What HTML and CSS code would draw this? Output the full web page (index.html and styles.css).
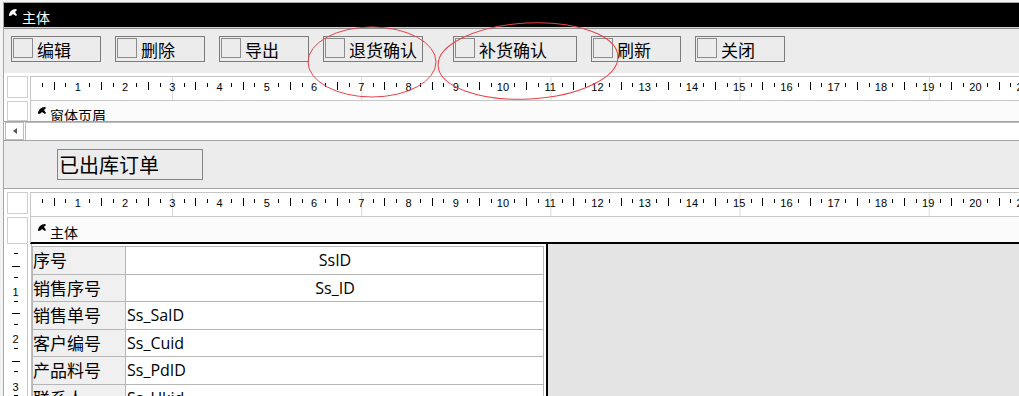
FILE: index.html
```html
<!DOCTYPE html>
<html lang="zh-CN">
<head>
    <meta charset="UTF-8">
    <meta name="viewport" content="width=device-width, initial-scale=1.0">
    <title>已出库订单</title>
    <link rel="stylesheet" href="styles.css">
</head>
<body>
    <div class="designer">
        <div class="form-title">
            <svg class="grip" width="8" height="8" viewBox="0 0 8 8"><path d="M0 7 C0 3 3 0 7 0 L8 1 L6 3 L8 6 L7 7 L4 5 C3 6 2 7 0 7 Z"/></svg>
            <span>主体</span>
        </div>

        <div class="toolbar">
            <div class="cmd"><span class="box"></span>编辑</div>
            <div class="cmd"><span class="box"></span>删除</div>
            <div class="cmd"><span class="box"></span>导出</div>
            <div class="cmd w100"><span class="box"></span>退货确认</div>
            <div class="cmd w124"><span class="box"></span>补货确认</div>
            <div class="cmd"><span class="box"></span>刷新</div>
            <div class="cmd"><span class="box"></span>关闭</div>
        </div>

        <div class="lane ruler-lane">
            <div class="gutter"><div class="gbox"></div></div>
            <div class="ruler hruler"></div>
        </div>

        <div class="lane section">
            <div class="gutter"><div class="gbox"></div></div>
            <div class="sec-head">
                <svg class="grip" width="8" height="8" viewBox="0 0 8 8"><path d="M0 7 C0 3 3 0 7 0 L8 1 L6 3 L8 6 L7 7 L4 5 C3 6 2 7 0 7 Z"/></svg>
                <span>窗体页眉</span>
            </div>
        </div>

        <div class="hscroll">
            <div class="hbtn"></div>
            <div class="hfield"></div>
        </div>

        <div class="form-header">
            <div class="caption">已出库订单</div>
        </div>

        <div class="lane ruler-lane">
            <div class="gutter"><div class="gbox"></div></div>
            <div class="ruler hruler"></div>
        </div>

        <div class="lane section body-sec">
            <div class="gutter"><div class="gbox"></div></div>
            <div class="sec-head">
                <svg class="grip" width="8" height="8" viewBox="0 0 8 8"><path d="M0 7 C0 3 3 0 7 0 L8 1 L6 3 L8 6 L7 7 L4 5 C3 6 2 7 0 7 Z"/></svg>
                <span>主体</span>
            </div>
        </div>

        <div class="detail">
            <div class="vruler" id="vruler"></div>
            <div class="canvas">
                <table class="fields">
                    <tr><td class="lab">序号</td><td class="val mid">SsID</td></tr>
                    <tr><td class="lab">销售序号</td><td class="val mid">Ss_ID</td></tr>
                    <tr><td class="lab">销售单号</td><td class="val">Ss_SaID</td></tr>
                    <tr><td class="lab">客户编号</td><td class="val">Ss_Cuid</td></tr>
                    <tr><td class="lab">产品料号</td><td class="val">Ss_PdID</td></tr>
                    <tr><td class="lab">联系人</td><td class="val">Ss_Ukid</td></tr>
                </table>
            </div>
            <div class="outside"></div>
        </div>
    </div>

    <svg class="marks" width="1019" height="396">
        <ellipse cx="372" cy="62" rx="64" ry="35"/>
        <ellipse cx="528" cy="61" rx="90" ry="38" transform="rotate(-3 528 61)"/>
    </svg>

    <script>
        function buildRuler(el, count, vertical) {
            for (let q = 1; q <= count; q++) {
                let cell = document.createElement("span");
                cell.className = vertical ? "vq" : "q";
                let mark = document.createElement("i");
                if (q % 4 === 0) {
                    mark.className = "num";
                    mark.innerText = q / 4;
                } else if (q % 4 === 2) {
                    mark.className = "half";
                } else {
                    mark.className = "tick";
                }
                cell.appendChild(mark);
                el.appendChild(cell);
            }
        }

        let rulers = document.querySelectorAll(".hruler");
        for (let i = 0; i < rulers.length; i++) {
            buildRuler(rulers[i], 86, false);
        }
        buildRuler(document.getElementById("vruler"), 14, true);
    </script>
</body>
</html>
```

FILE: styles.css
```css
* {
    box-sizing: border-box;
}
html, body {
    margin: 0;
    height: 396px;
    overflow: hidden;
}
body {
    background: #f3f3f3;
    padding: 2px 0 0 3px;
    font-family: "Noto Sans CJK SC", sans-serif;
    color: #000;
}
.designer {
    height: 394px;
    overflow: hidden;
    background: #fff;
    border-top: 1px solid #a8a8a8;
    border-left: 1px solid #a8a8a8;
}

/* title bar */
.form-title {
    height: 25px;
    display: flex;
    align-items: flex-start;
    padding-left: 5px;
    background: #000;
    color: #fff;
    font-size: 14px;
    border-bottom: 1px solid #d4d4d4;
}
.form-title .grip {
    margin: 6px 5px 0 0;
    fill: #fff;
}
.form-title span {
    line-height: 20px;
    margin-top: 4px;
}

/* command buttons */
.toolbar {
    display: flex;
    gap: 14px;
    height: 45px;
    padding: 7px 0 0 7px;
    background: #ececec;
    border-top: 1px solid #8c8c8c;
}
.cmd {
    flex: none;
    width: 90px;
    height: 26px;
    display: flex;
    align-items: center;
    padding-left: 1px;
    border: 1px solid #7c7c7c;
    font-size: 17px;
    white-space: nowrap;
}
.cmd .box {
    flex: none;
    width: 20px;
    height: 20px;
    align-self: flex-start;
    margin: 1px 4px 0 0;
    border: 1px solid #8c8c8c;
}
.cmd.w100 {
    width: 100px;
}
.cmd.w124 {
    width: 124px;
    margin-left: 16px;
}

/* lanes with left gutter */
.lane {
    display: flex;
}
.gutter {
    flex: none;
    width: 26px;
    padding-left: 3px;
}
.gbox {
    width: 21px;
    height: 100%;
    border: 1px solid #cfcfcf;
}
.ruler-lane {
    height: 25px;
    margin-top: 3px;
}
.ruler-lane .gbox {
    height: 22px;
}
.ruler {
    flex: 1;
    display: flex;
    overflow: hidden;
    padding-left: 5.4px;
    border: 1px solid #c6c6c6;
    border-right: 0;
    background: linear-gradient(to right, #d9d9d9 0 1px, transparent 1px) 141px 0 / 189.2px 100% repeat-x, #fff;
}
.q {
    flex: none;
    width: 11.825px;
    display: flex;
    justify-content: center;
}
.q i, .vq i {
    font-style: normal;
    display: block;
}
.q .tick {
    width: 1px;
    height: 4px;
    margin-top: 6px;
    background: #000;
}
.q .half {
    width: 1px;
    height: 8px;
    margin-top: 5px;
    background: #000;
}
.q .num, .vq .num {
    font: 11px/10px "Liberation Sans", sans-serif;
    margin-top: 5px;
}

/* section bars */
.section {
    height: 21px;
    border-bottom: 1px solid #a4a4a4;
}
.sec-head {
    flex: 1;
    display: flex;
    align-items: flex-start;
    overflow: hidden;
    padding-left: 7px;
    border-left: 1px solid #c6c6c6;
    background: #fbfbfb;
    font-size: 14px;
}
.sec-head .grip {
    flex: none;
    margin: 6px 4px 0 0;
    fill: #000;
}
.sec-head span {
    line-height: 18px;
    margin-top: 5px;
    white-space: nowrap;
}
.body-sec {
    height: 27px;
    border-bottom: 0;
}
.body-sec .sec-head {
    border-bottom: 2px solid #000;
}
.body-sec .sec-head .grip {
    margin-top: 7px;
}
.body-sec .sec-head span {
    margin-top: 6px;
}

/* horizontal scroller */
.hscroll {
    display: flex;
    height: 19px;
    padding-left: 1px;
    border-bottom: 1px solid #a4a4a4;
}
.hbtn {
    width: 19px;
    display: flex;
    align-items: center;
    justify-content: center;
    border: 1px solid #bcbcbc;
}
.hbtn::before {
    content: "";
    border: 3px solid transparent;
    border-left: 0;
    border-right: 4px solid #555;
}
.hfield {
    flex: 1;
    margin-left: 1px;
    border-top: 1px solid #bcbcbc;
    border-left: 1px solid #bcbcbc;
}

/* form header */
.form-header {
    height: 48px;
    padding: 8px 0 0 53px;
    background: #ececec;
    border-bottom: 1px solid #a4a4a4;
}
.caption {
    width: 146px;
    height: 31px;
    padding-left: 1px;
    border: 1px solid #858585;
    font-size: 20px;
    line-height: 29px;
    white-space: nowrap;
}

/* detail */
.detail {
    display: flex;
    height: 160px;
}
.vruler {
    flex: none;
    width: 24px;
    margin-right: 3px;
    padding-top: 6.9px;
    display: flex;
    flex-direction: column;
    border-right: 1px solid #c8c8c8;
}
.vq {
    flex: none;
    height: 11.825px;
    display: flex;
    align-items: center;
    justify-content: center;
}
.vq .tick {
    width: 4px;
    height: 1px;
    background: #000;
    transform: translateY(-3px);
}
.vq .half {
    width: 8px;
    height: 1px;
    background: #000;
    transform: translateY(-2px);
}
.vq .num {
    margin-top: 0;
}
.canvas {
    flex: none;
    width: 515px;
    padding-top: 2px;
    border-left: 1px solid #bcbcbc;
}
.outside {
    flex: 1;
    border-left: 2px solid #000;
    background: #e4e4e4;
}
.fields {
    width: 512px;
    border-collapse: collapse;
    font-size: 17px;
}
.fields tr {
    height: 27.5px;
}
.fields td {
    padding: 0 0 0 1px;
    border: 1px solid #b6b6b6;
    line-height: 20px;
    white-space: nowrap;
}
.fields .lab {
    width: 93px;
    padding-left: 0;
    background: #f0f0f0;
}
.fields .val {
    font-family: "Open Sans", "Noto Sans CJK SC", sans-serif;
    font-size: 16px;
}
.fields .mid {
    text-align: center;
}

/* hand-drawn marks on top */
.marks {
    position: absolute;
    left: 0;
    top: 0;
    pointer-events: none;
    fill: none;
    stroke: #e8434b;
    stroke-width: 1;
}
```
